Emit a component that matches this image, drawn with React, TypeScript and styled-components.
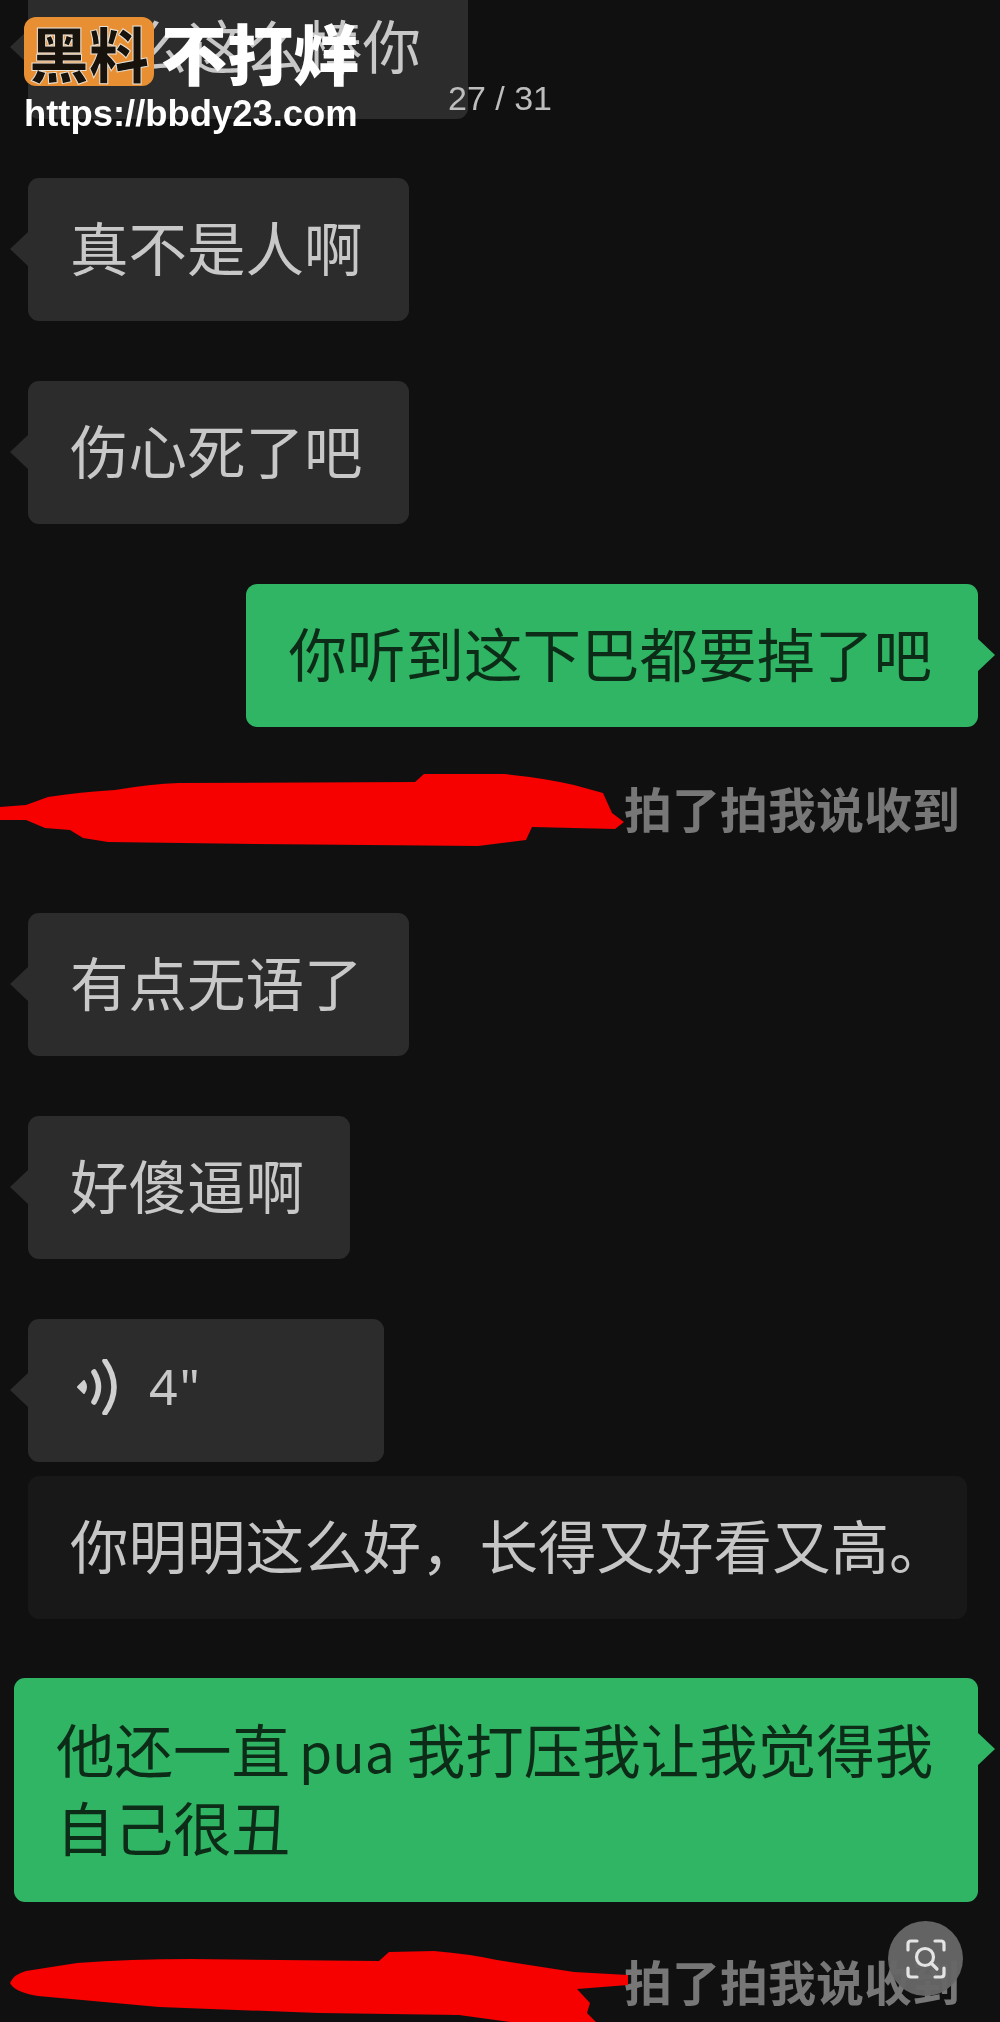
import React from "react";
import styled, { createGlobalStyle } from "styled-components";

const GlobalStyle = createGlobalStyle`
    html, body {
        margin: 0;
        padding: 0;
        background: #101011;
    }
`;

const Page = styled.div`
    position: relative;
    width: 1000px;
    height: 2022px;
    overflow: hidden;
    background: #101011;
    font-family: "Noto Sans CJK SC", "Noto Sans", sans-serif;
`;

const Chat = styled.div`
    display: flex;
    flex-direction: column;
    margin-top: -24px;
    filter: blur(0.6px);
`;

const Bubble = styled.div<{ $mine?: boolean; $width?: number; $dim?: boolean; $gap?: number; $tall?: boolean }>`
    position: relative;
    align-self: ${(p) => (p.$mine ? "flex-end" : "flex-start")};
    margin: ${(p) => p.$gap ?? 60}px ${(p) => (p.$mine ? "22px" : "0")} 0 ${(p) => (p.$mine ? "0" : "28px")};
    box-sizing: border-box;
    width: ${(p) => (p.$width ? `${p.$width}px` : "auto")};
    padding: ${(p) => (p.$tall ? "31px 46px 37px 42px" : "26px 46px 34px 42px")};
    border-radius: 11px;
    background: ${(p) => (p.$mine ? "#2fb564" : p.$dim ? "#181818" : "#2c2c2c")};
    color: ${(p) => (p.$mine ? "#0d2c18" : p.$dim ? "#c6c6c6" : "#c8c8c8")};
    font-size: 58.5px;
    font-weight: 400;
    line-height: ${(p) => (p.$tall ? "78px" : "83px")};
    white-space: nowrap;

    &::after {
        content: ${(p) => (p.$dim ? "none" : '""')};
        position: absolute;
        top: 54px;
        ${(p) => (p.$mine ? "right: -17px;" : "left: -18px;")}
        border-style: solid;
        border-width: 17px ${(p) => (p.$mine ? "0 17px 18px" : "18px 17px 0")};
        border-color: transparent ${(p) => (p.$mine ? "transparent transparent #2fb564" : "#2c2c2c transparent transparent")};
    }
`;

const Latin = styled.span`
    margin: 0 12px 0 9px;
    font-size: 53.5px;
    line-height: 0;
`;

const VoiceRow = styled.div`
    display: flex;
    align-items: center;
    gap: 30px;
    height: 83px;
    padding-left: 7px;
    font-family: "Noto Sans", sans-serif;
    font-size: 50px;
    letter-spacing: 2px;
`;

const Nudge = styled.div<{ $gap: number }>`
    align-self: flex-end;
    margin: ${(p) => p.$gap}px 40px 0 0;
    color: #777;
    font-size: 48px;
    font-weight: 700;
    line-height: 60px;
`;

const Scribbles = styled.svg`
    position: absolute;
    top: 0;
    left: 0;
`;

const Watermark = styled.div`
    position: absolute;
    top: 17px;
    left: 24px;
    display: flex;
    flex-direction: column;
`;

const Brand = styled.div`
    display: flex;
    align-items: center;
    gap: 7px;
`;

const LogoBadge = styled.div`
    display: flex;
    align-items: center;
    justify-content: center;
    width: 130px;
    height: 69px;
    border-radius: 12px;
    background: #e88f33;
    color: #17120c;
    font-size: 60px;
    font-weight: 900;
    line-height: 1;
    -webkit-text-stroke: 1px #e9e0d4;
`;

const BrandName = styled.div`
    color: #fff;
    font-size: 66px;
    font-weight: 900;
    line-height: 69px;
`;

const SiteUrl = styled.div`
    margin-top: 7px;
    color: #fff;
    font-family: "Liberation Sans", sans-serif;
    font-size: 36.4px;
    font-weight: 700;
    line-height: 42px;
`;

const Counter = styled.div`
    position: absolute;
    top: 78px;
    left: 448px;
    color: #bdbdbd;
    font-family: "Liberation Sans", sans-serif;
    font-size: 34px;
    line-height: 40px;
`;

const LensButton = styled.div`
    position: absolute;
    top: 1921px;
    left: 888px;
    display: flex;
    align-items: center;
    justify-content: center;
    width: 75px;
    height: 75px;
    border-radius: 50%;
    background: rgba(102, 102, 102, 0.97);
`;

const VoiceIcon = () => (
    <svg width="42" height="56" viewBox="0 0 42 56" fill="none">
        <path d="M1 28 L7 22 Q11 28 7 34 Z" fill="#d0d0d0" stroke="#d0d0d0" strokeWidth="2" strokeLinejoin="round" />
        <path d="M17 13 Q26 28 17 43" stroke="#d0d0d0" strokeWidth="5.5" strokeLinecap="round" />
        <path d="M28 2 Q46 28 28 54" stroke="#d0d0d0" strokeWidth="5.5" strokeLinecap="round" />
    </svg>
);

const LensIcon = () => (
    <svg width="40" height="40" viewBox="0 0 40 40" fill="none" stroke="#e4e4e4" strokeWidth="3.2" strokeLinecap="round" strokeLinejoin="round">
        <path d="M2 11 V5 Q2 2 5 2 H11" />
        <path d="M29 2 H35 Q38 2 38 5 V11" />
        <path d="M2 29 V35 Q2 38 5 38 H11" />
        <path d="M38 29 V35 Q38 38 35 38 H29" />
        <circle cx="19" cy="18" r="8.5" />
        <path d="M25 24 L31 30" />
    </svg>
);

const App = () => {
    return (
        <Page>
            <GlobalStyle />
            <Chat>
                <Bubble $gap={0} $width={440}>怎么这么棒你</Bubble>
                <Bubble $gap={59}>真不是人啊</Bubble>
                <Bubble>伤心死了吧</Bubble>
                <Bubble $mine>你听到这下巴都要掉了吧</Bubble>
                <Nudge $gap={50}>拍了拍我说收到</Nudge>
                <Bubble $gap={76}>有点无语了</Bubble>
                <Bubble>好傻逼啊</Bubble>
                <Bubble $width={356}>
                    <VoiceRow>
                        <VoiceIcon />
                        4"
                    </VoiceRow>
                </Bubble>
                <Bubble $dim $gap={14} $width={939}>你明明这么好，长得又好看又高。</Bubble>
                <Bubble $mine $tall $gap={59} $width={964}>
                    他还一直<Latin>pua</Latin>我打压我让我觉得我
                    <br />
                    自己很丑
                </Bubble>
                <Nudge $gap={48}>拍了拍我说收到</Nudge>
            </Chat>

            <Scribbles width="1000" height="2022" viewBox="0 0 1000 2022">
                <path
                    fill="#f60000"
                    d="M0 807 L26 805 L48 797 Q80 792 115 790 Q150 784 179 783 L415 782 L424 774 L504 774 Q545 778 574 785 L603 793 L612 813 L624 822 L615 829 L532 827 L526 840 L478 846 L255 844 L108 842 L83 838 L70 830 L45 828 L26 820 L0 820 Z"
                />
                <path
                    fill="#f60000"
                    d="M10 1983 Q14 1974 26 1971 L77 1963 Q130 1959 191 1959 L379 1961 L389 1952 L434 1951 Q470 1954 497 1960 L574 1972 L628 1975 L628 1985 L577 1989 L590 2003 L587 2013 L596 2022 L510 2022 L459 2015 L319 2013 L159 2007 L38 1996 Q14 1992 10 1983 Z"
                />
            </Scribbles>

            <Watermark>
                <Brand>
                    <LogoBadge>黑料</LogoBadge>
                    <BrandName>不打烊</BrandName>
                </Brand>
                <SiteUrl>https://bbdy23.com</SiteUrl>
            </Watermark>
            <Counter>27 / 31</Counter>
            <LensButton>
                <LensIcon />
            </LensButton>
        </Page>
    );
};

export default App;
